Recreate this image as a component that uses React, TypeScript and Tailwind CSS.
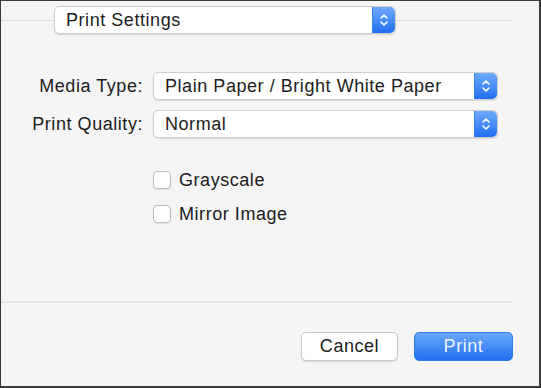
import React from "react";

function Stepper() {
  return (
    <div className="w-[23px] h-full rounded-r-[5px] bg-gradient-to-b from-[#6eaafb] to-[#1f6ef1] flex items-center justify-center border-l border-[#3b82f0]">
      <svg width="10" height="16" viewBox="0 0 10 16" fill="none" stroke="white" strokeWidth="1.6" strokeLinecap="round" strokeLinejoin="round">
        <path d="M2 6 L5 3 L8 6" />
        <path d="M2 10 L5 13 L8 10" />
      </svg>
    </div>
  );
}

function Popup({ text, width }: { text: string; width: string }) {
  return (
    <div className={`${width} h-[28px] flex bg-white rounded-[5px] border border-[#cfcfcf] shadow-[0_1px_1px_rgba(0,0,0,0.12)]`}>
      <div className="flex-1 flex items-center pl-[11px] text-[18px] tracking-[0.55px] text-[#1c1c1c]">{text}</div>
      <Stepper />
    </div>
  );
}

function Check({ label }: { label: string }) {
  return (
    <div className="h-[18px] flex items-center">
      <div className="w-[18px] h-[18px] rounded-[4px] bg-white border border-[#bdbdbd] shadow-[0_1px_1px_rgba(0,0,0,0.08)]" />
      <span className="ml-[8px] text-[18px] tracking-[0.55px] text-[#1c1c1c]">{label}</span>
    </div>
  );
}

export default function App() {
  return (
    <div
      className="w-[541px] h-[388px] bg-[#f5f5f5] border-l border-t border-r-2 border-b-2 border-[#3a3a3a] flex flex-col"
      style={{ fontFamily: '"Liberation Sans", Arial, sans-serif' }}
    >
      <div className="mt-[5px] h-[28px] flex items-center">
        <div className="w-[53px] h-px bg-[#dcdcdc]" />
        <Popup text="Print Settings" width="w-[342px]" />
        <div className="flex-1 h-px bg-[#dcdcdc] mr-[27px]" />
      </div>

      <div className="mt-[38px] flex items-center">
        <div className="w-[142px] text-right text-[18px] tracking-[0.55px] text-[#1c1c1c]">Media Type:</div>
        <div className="ml-[10px]">
          <Popup text="Plain Paper / Bright White Paper" width="w-[345px]" />
        </div>
      </div>
      <div className="mt-[10px] flex items-center">
        <div className="w-[142px] text-right text-[18px] tracking-[0.55px] text-[#1c1c1c]">Print Quality:</div>
        <div className="ml-[10px]">
          <Popup text="Normal" width="w-[345px]" />
        </div>
      </div>

      <div className="mt-[33px] ml-[152px] flex flex-col gap-[16px]">
        <Check label="Grayscale" />
        <Check label="Mirror Image" />
      </div>

      <div className="mt-[78px] w-[512px] h-[2px] bg-[#e4e4e4]" />

      <div className="mt-[29px] mr-[26px] flex justify-end gap-[16px]">
        <button className="w-[97px] h-[29px] rounded-[5px] bg-white border border-[#c8c8c8] shadow-[0_1px_1px_rgba(0,0,0,0.12)] text-[18px] tracking-[0.55px] text-[#1c1c1c]">
          Cancel
        </button>
        <button className="w-[99px] h-[29px] rounded-[5px] bg-gradient-to-b from-[#69a7fa] to-[#1f6ff1] border border-[#2f7bf0] text-[18px] tracking-[0.55px] text-[#eef4ff]">
          Print
        </button>
      </div>
    </div>
  );
}
